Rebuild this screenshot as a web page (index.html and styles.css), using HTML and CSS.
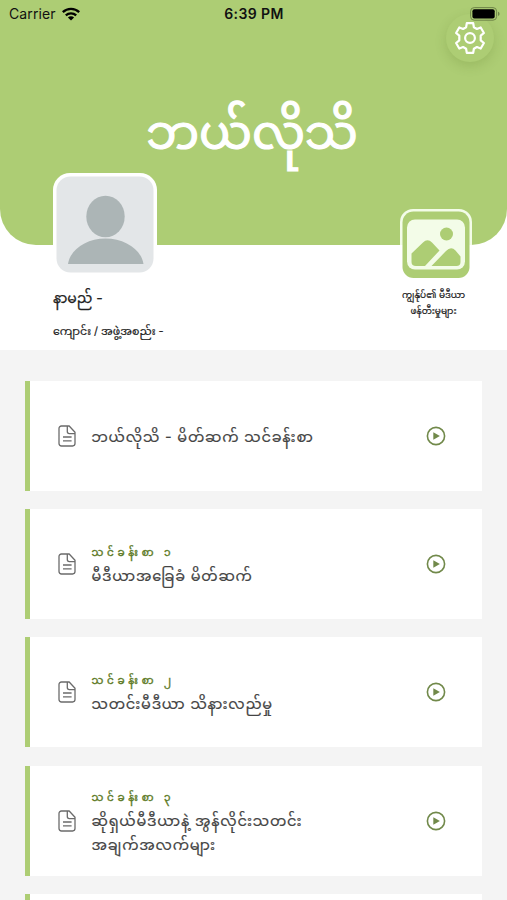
FILE: index.html
```html
<!DOCTYPE html>
<html lang="my">
<head>
<meta charset="utf-8">
<title>ဘယ်လိုသိ</title>
<link rel="stylesheet" href="styles.css">
</head>
<body>
<svg class="defs" width="0" height="0" aria-hidden="true">
  <symbol id="doc" viewBox="0 0 18 22"><path d="M11.2 1H3.4A2.4 2.4 0 0 0 1 3.4v15.2A2.4 2.4 0 0 0 3.4 21h11.2a2.4 2.4 0 0 0 2.4-2.4V7.3zM9.3 1v5.6a2 2 0 0 0 2 2H17M5 12h8.6M5 15.8h8.6"/></symbol>
  <symbol id="play" viewBox="0 0 20 20"><circle cx="10" cy="10" r="8.6"/><path d="M7.3 6.2v7.6l6.6-3.8z"/></symbol>
</svg>
<div class="screen">
  <header class="hero">
    <div class="status">
      <div class="carrier"><span>Carrier</span>
        <svg width="18" height="14" viewBox="0 0 18 14"><g fill="none" stroke="#000" stroke-width="2.3"><path d="M.8 5.1a11.8 11.8 0 0 1 16.4 0"/><path d="M3.8 8.4a7.5 7.5 0 0 1 10.4 0"/></g><path d="M9 13.6 5.9 10.5a4.4 4.4 0 0 1 6.2 0z"/></svg>
      </div>
      <div class="time">6:39 PM</div>
      <svg class="battery" width="31" height="14" viewBox="0 0 31 14"><rect x=".6" y=".6" width="26" height="12.6" rx="3.6" fill="none" stroke="#6f8548"/><rect x="2.4" y="2.3" width="22.3" height="9.2" rx="2"/><path d="M28 4.8c2 .6 2 3.6 0 4.2z" fill="#6f8548"/></svg>
    </div>
    <button class="settings" aria-label="Settings">
      <svg width="32" height="32" viewBox="0 0 32 32"><path d="M12.8 1.2h6.4l.7 4.1 3 1.7 3.8-1.5 3.2 5.5-3.2 2.7v4.6l3.2 2.7-3.2 5.5-3.8-1.5-3 1.7-.7 4.1h-6.4l-.7-4.1-3-1.7-3.8 1.5L2.1 21l3.2-2.7v-4.6L2.1 11l3.2-5.5L9.1 7l3-1.7z"/><circle cx="16" cy="16" r="4.9"/></svg>
    </button>
    <h1>ဘယ်လိုသိ</h1>
  </header>
  <section class="profile">
    <div class="person">
      <svg class="avatar" width="104" height="101" viewBox="0 0 104 101"><rect width="104" height="101" rx="17" fill="#fff"/><rect x="3.5" y="3.5" width="97" height="96" rx="14" fill="#e3e6e8"/><ellipse cx="52.5" cy="43.5" rx="19.2" ry="20.8" fill="#acb5b6"/><path d="M15 91c2-14 18-25.500 37.500-25.500S88.500 77 90.500 91z" fill="#acb5b6"/></svg>
      <p class="name">နာမည် -</p>
      <p class="school">ကျောင်း / အဖွဲ့အစည်း -</p>
    </div>
    <div class="media">
      <svg width="72" height="70" viewBox="0 0 72 70"><rect x="0" y="0" width="72" height="70" rx="13" fill="#f3fce8"/><path d="M0 36h72v34H0z" fill="#fff"/><rect x="2.5" y="2.5" width="67" height="66.500" rx="11" fill="#adcd74"/><rect x="7" y="10.500" width="58" height="50" rx="8" fill="#f3fce8"/><circle cx="46.500" cy="25" r="6.500" fill="#adcd74"/><path d="M11.500 44.500 23 33.500q4.500-4.500 9 0l7.500 8L25 57h-9q-4.500 0-4.500-4zM31.500 57 46 42q5-5 9.500-.5l5 6v5.500q0 4-4 4z" fill="#adcd74"/></svg>
      <p>ကျွန်ုပ်၏ မီဒီယာ<br>ဖန်တီးမှုများ</p>
    </div>
  </section>
  <main class="lessons">
    <article class="card"><svg class="doc"><use href="#doc"/></svg><div class="text"><h2>ဘယ်လိုသိ - မိတ်ဆက် သင်ခန်းစာ</h2></div><svg class="play"><use href="#play"/></svg></article>
    <article class="card"><svg class="doc"><use href="#doc"/></svg><div class="text"><p>သင်ခန်းစာ ၁</p><h2>မီဒီယာအခြေခံ မိတ်ဆက်</h2></div><svg class="play"><use href="#play"/></svg></article>
    <article class="card"><svg class="doc"><use href="#doc"/></svg><div class="text"><p>သင်ခန်းစာ ၂</p><h2>သတင်းမီဒီယာ သိနားလည်မှု</h2></div><svg class="play"><use href="#play"/></svg></article>
    <article class="card"><svg class="doc"><use href="#doc"/></svg><div class="text"><p>သင်ခန်းစာ ၃</p><h2>ဆိုရှယ်မီဒီယာနဲ့ အွန်လိုင်းသတင်း<br>အချက်အလက်များ</h2></div><svg class="play"><use href="#play"/></svg></article>
    <article class="card"></article>
  </main>
</div>
</body>
</html>
```
FILE: styles.css
```css
* { box-sizing: border-box; }
body, h1, h2, p { margin: 0; font-weight: 400; }
body {
  font-family: Inter, "Noto Sans Myanmar", "Noto Sans", sans-serif;
  background: #f4f4f4;
  color: #222;
}
.defs { display: block; }
.screen {
  height: 900px;
  overflow: hidden;
  background: linear-gradient(#fff 350px, #f4f4f4 350px);
}
.hero {
  position: relative;
  height: 245px;
  background: #adcd74;
  border-radius: 0 0 36px 36px;
}
.status {
  display: grid;
  grid-template-columns: 1fr auto 1fr;
  align-items: center;
  height: 27px;
  padding: 0 6px 0 9px;
  color: #111;
}
.carrier { display: flex; align-items: center; gap: 6px; font-size: 14px; letter-spacing: .1px; }
.time { margin-right: 2px; font-size: 14px; font-weight: 600; letter-spacing: .4px; }
.battery { position: relative; z-index: 1; justify-self: end; }
.settings {
  position: absolute;
  top: 14px;
  right: 13px;
  width: 48px;
  height: 48px;
  padding: 8px;
  border: 0;
  border-radius: 50%;
  background: #adcd74;
  box-shadow: 0 4px 12px rgba(80, 110, 30, .2);
}
.settings svg { display: block; fill: none; stroke: #fff; stroke-width: 2.2; stroke-linejoin: round; }
h1 {
  margin-top: 60px;
  height: 90px;
  padding-right: 3px;
  text-align: center;
  font-size: 47px;
  line-height: 90px;
  color: #fff;
  white-space: nowrap;
  -webkit-text-stroke: 1.2px #fff;
}
.profile {
  position: relative;
  display: flex;
  justify-content: space-between;
  height: 177px;
  margin-top: -72px;
  padding: 0 22px 0 53px;
}
.avatar { display: block; }
.name { margin-top: 9px; font-size: 14px; line-height: 30px; white-space: nowrap; -webkit-text-stroke: .25px; }
.school { margin-top: 5px; font-size: 11px; line-height: 26px; white-space: nowrap; -webkit-text-stroke: .2px; }
.media { width: 98px; padding-top: 36px; text-align: center; }
.media svg { display: block; margin: 0 auto; }
.media p { margin-top: 8px; padding-right: 5px; font-size: 9px; line-height: 16px; white-space: nowrap; -webkit-text-stroke: .2px; }
.lessons { display: grid; gap: 18.4px; padding: 30.6px 25px 0; }
.card {
  display: flex;
  align-items: center;
  height: 110px;
  padding: 0 36px 0 28px;
  border-left: 5px solid #adcd74;
  background: #fff;
}
.doc { width: 18px; height: 22px; fill: none; stroke: #6b6b6b; stroke-width: 1.3; stroke-linejoin: round; }
.text { flex: 1; margin-left: 15.5px; padding-top: 2px; white-space: nowrap; }
.text h2 { font-size: 14.5px; line-height: 24px; letter-spacing: .82px; color: #444; -webkit-text-stroke: .2px; }
.text p { font-size: 10.5px; line-height: 22px; letter-spacing: 3.7px; color: #5d7a26; -webkit-text-stroke: .4px; }
.play { width: 20px; height: 20px; fill: none; stroke: #71894a; stroke-width: 1.6; }
#play path { fill: #71894a; stroke: none; }
```
